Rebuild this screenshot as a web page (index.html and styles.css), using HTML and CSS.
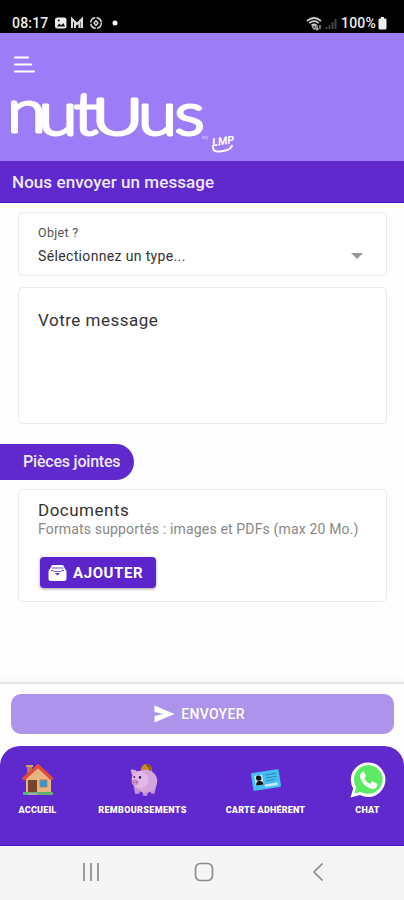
FILE: index.html
```html
<!DOCTYPE html>
<html lang="fr">
<head>
<meta charset="utf-8">
<title>Nous envoyer un message</title>
<link rel="stylesheet" href="styles.css">
</head>
<body>
<div class="status">
  <span class="time">08:17</span>
  <svg class="notif" width="66" height="14" viewBox="0 0 66 14">
    <rect x="1" y="1.5" width="11.5" height="11" rx="2.5" fill="#eee"/>
    <path d="M2.8 10.5l2.5-3 2 1.7 2-2.2 1.8 3.5z" fill="#111"/><circle cx="4.800" cy="4.500" r="1" fill="#111"/>
    <path d="M18 12V3l5 5 5-5v9M21 5v7M25.500 5v7" fill="none" stroke="#ddd" stroke-width="2"/>
    <circle cx="42" cy="7" r="5.300" fill="none" stroke="#ddd" stroke-width="1.500" stroke-dasharray="7 1.3"/>
    <path d="M42 3.500l2.800 3.500-2.800 3.500-2.800-3.500z" fill="#ddd"/><circle cx="42" cy="7" r="1" fill="#222"/>
    <circle cx="61" cy="7" r="2.500" fill="#fff"/>
  </svg>
  <svg class="signal" width="34" height="16" viewBox="0 0 34 16">
    <path d="M1 5Q8-1 15 5M3.200 7.200Q8 3 12.800 7.200M5.500 9.500Q8 7.500 10.500 9.500" fill="none" stroke="#ccc" stroke-width="1.700"/>
    <path d="M8 9l1.500 2L8 13l-1.500-2zM11 9v5M9.500 12.500l1.500 1.500 1.500-1.500M14 13V9" fill="none" stroke="#bbb" stroke-width="1.200"/>
    <path d="M20.500 13v-2M23.500 13V9M26.500 13V6M29.500 13V3" stroke="#444" stroke-width="2"/>
  </svg>
  <span class="percent">100%</span>
  <svg width="9" height="13" viewBox="0 0 9 13"><path d="M3 0h3v1.500h1.500q1 0 1 1V11q0 1.500-1.500 1.500H2Q.5 12.500.5 11V2.500q0-1 1-1H3z" fill="#eee"/></svg>
</div>
<header class="header">
  <svg class="menu" width="24" height="18" viewBox="0 0 24 18"><path d="M2 1.500h13M2 8.500h16M2 15.500h19" stroke="#fff" stroke-width="2.200" stroke-linecap="round"/></svg>
  <svg class="logo" width="240" height="66" viewBox="0 0 240 66">
    <g class="wordmark">
      <text transform="scale(1.200 1)"><tspan x="5.800" y="44">n</tspan><tspan x="32" y="47">u</tspan><tspan x="61.500" y="46.500">t</tspan></text>
      <text class="cap" transform="scale(1.360 1)" x="67.500" y="47">U</text>
      <text transform="scale(1.200 1)"><tspan x="115" y="47">u</tspan><tspan x="145.500" y="46.500">s</tspan></text>
    </g>
    <text class="by" x="202" y="51">by</text>
    <g transform="rotate(-8 222 52)">
      <text class="brand" x="212" y="57">LMP</text>
      <path d="M212 57q-1 6 6 6h5q6 0 8-4" fill="none" stroke="#fff" stroke-width="2" stroke-linecap="round"/>
    </g>
  </svg>
</header>
<h1 class="title">Nous envoyer un message</h1>
<main class="content">
  <section class="card subject">
    <div class="label">Objet ?</div>
    <div class="select"><span>Sélectionnez un type...</span><i class="caret"></i></div>
  </section>
  <section class="card message">Votre message</section>
  <h2 class="pill">Pièces jointes</h2>
  <section class="card docs">
    <div class="doc-title">Documents</div>
    <div class="doc-info">Formats supportés : images et PDFs (max 20 Mo.)</div>
    <button class="add">
      <svg width="19" height="18" viewBox="0 0 19 18"><path d="M3 3q0-2 2-2h9q2 0 2 2l2.500 4v8q0 2-2.500 2H3Q.5 17 .5 15V7z" fill="#fff"/><path d="M3.500 4h12M3 6.500h2l1.500 1h6l1.500-1h2" fill="none" stroke="#7650d0" stroke-width="1"/><path d="M7 9h5l-2.500 2.500z" fill="#5b27cc"/></svg>
      <span>AJOUTER</span>
    </button>
  </section>
</main>
<div class="send-bar">
  <button class="send"><svg width="21" height="18" viewBox="0 0 21 18"><path d="M.5.500L20.500 9 .5 17.500V11l9-2-9-2z" fill="#fff"/></svg><span>ENVOYER</span></button>
</div>
<nav class="tabs">
  <div class="tab home">
    <svg width="34" height="36" viewBox="0 0 34 36">
      <path d="M6 4h5v12H6z" fill="#b87855"/><path d="M5 3h7v2H5z" fill="#d89a72"/>
      <path d="M5 17L17 5l13 12v14H5z" fill="#e8b481"/>
      <path d="M2 17.500L17 4l14.500 13.500" fill="none" stroke="#e44b35" stroke-width="3.500"/>
      <path d="M7 18h9v13H7z" fill="#76452f"/><path d="M19 18h7v7h-7z" fill="#249be0" stroke="#b8804f"/>
      <path d="M2 30h30v3H2z" fill="#62ad72"/><path d="M7 31h10v2H7z" fill="#aaa"/>
    </svg><span>ACCUEIL</span>
  </div>
  <div class="tab refunds">
    <svg width="34" height="36" viewBox="0 0 34 36"><g transform="translate(3 1) scale(.88 .96)">
      <path d="M13 11q0-10 7-10t6 11z" fill="#c98c18"/><path d="M20 2q5 1 4 9" fill="none" stroke="#67431b" stroke-width="1.500"/>
      <path d="M5 23h7v9H7zM15 26h6v8h-5zM25 24h6l-2 8h-4z" fill="#c594d0"/>
      <ellipse cx="19" cy="19" rx="13" ry="12" fill="#d4a5dd"/><ellipse cx="12.500" cy="17" rx="9.500" ry="9" fill="#e3b9e9"/>
      <path d="M3.500 13L2 7q5-1 9 3zM14 9l4-2 2 6z" fill="#dba8df"/>
      <ellipse cx="7" cy="20" rx="4" ry="3" fill="#cb91d0"/><circle cx="5.500" cy="20" r=".7" fill="#805184"/><circle cx="8.500" cy="20" r=".7" fill="#805184"/>
      <circle cx="6" cy="14.500" r="1" fill="#392443"/><circle cx="12.500" cy="15" r="1.400" fill="#392443"/>
    </g></svg><span>REMBOURSEMENTS</span>
  </div>
  <div class="tab member">
    <svg width="34" height="36" viewBox="0 0 34 36"><g transform="rotate(-9 17 18)">
      <rect x="3" y="9" width="28" height="18" rx="1.500" fill="#48bdf0"/><rect x="6" y="12" width="8" height="10" fill="#b7eaff"/>
      <circle cx="10" cy="15" r="2.700" fill="#111"/><path d="M6.500 22q0-4 3.500-4t4 4z" fill="#111"/>
      <path d="M17 13h11M17 16h11M17 19h9" stroke="#2988ba"/><path d="M15 23.500h13" stroke="#c8eaf5" stroke-width="2.500"/>
    </g></svg><span>CARTE ADHÉRENT</span>
  </div>
  <div class="tab chat">
    <svg width="36" height="36" viewBox="0 0 36 36">
      <path d="M.5 35.500l2.700-9A17.300 17.300 0 1 1 10 33z" fill="#fff"/>
      <circle cx="18.300" cy="17.500" r="14.300" fill="#5bea62"/><path d="M4.500 31.500l2-8 6 6z" fill="#5bea62"/>
      <path d="M13 9.500q-5 3-2 8.500 4 8 12 9 4 0 4.500-5l-5-2.800-2.300 2.500q-4-1.500-6-5.500l1.800-2.200L14 9.500z" fill="#fff"/>
    </svg><span>CHAT</span>
  </div>
</nav>
<footer class="system">
  <svg width="18" height="18" viewBox="0 0 18 18"><path d="M2 0v18M9 0v18M16 0v18" stroke="#8c8c8c" stroke-width="1.700"/></svg>
  <svg width="20" height="20" viewBox="0 0 20 20"><rect x="1.500" y="1.500" width="17" height="17" rx="5" fill="none" stroke="#8c8c8c" stroke-width="1.700"/></svg>
  <svg width="12" height="20" viewBox="0 0 12 20"><path d="M10.500 1.500L2 10l8.500 8.500" fill="none" stroke="#8c8c8c" stroke-width="1.700"/></svg>
</footer>
</body>
</html>
```
FILE: styles.css
```css
* { box-sizing: border-box; }
body {
  margin: 0;
  width: 404px;
  height: 900px;
  display: flex;
  flex-direction: column;
  overflow: hidden;
  background: #fefefe;
  font-family: Roboto, "Liberation Sans", sans-serif;
  color: #333;
}
svg { display: block; flex: none; }
h1, h2 { margin: 0; }
button { border: 0; font-family: inherit; color: #fff; }
.status {
  height: 33px;
  padding: 13px 17px 0 12px;
  display: flex;
  align-items: flex-start;
  background: #000;
  color: #eee;
}
.time { font-size: 14px; line-height: 20px; letter-spacing: .2px; font-weight: 500; }
.notif { margin: 3px 0 0 5px; }
.signal { margin: 3px 1px 0 auto; }
.percent { font-size: 14px; line-height: 20px; font-weight: 500; margin-right: 2px; letter-spacing: .2px; }
.status > svg:last-child { margin-top: 4px; }
.header { height: 128px; padding-top: 23px; background: #9d7cf7; }
.menu { margin-left: 13px; }
.logo { margin-top: 14px; overflow: visible; }
.wordmark { font: 300 59px Lato, sans-serif; fill: #fff; stroke: #fff; stroke-width: 3px; stroke-linejoin: round; }
.cap { font-size: 52px; }
.by { font: 6px Roboto, sans-serif; fill: #d8c8ff; }
.brand { font: italic 700 11px Roboto, sans-serif; fill: #fff; }
.title {
  height: 42px;
  padding-left: 12px;
  line-height: 42px;
  font-size: 17px;
  font-weight: 500;
  letter-spacing: .07px;
  color: #eee8ff;
  background: #5f29ce;
  border-bottom: 1px solid #4a0fc0;
}
.content { height: 479px; padding: 9px 17px 0 18px; }
.card { border: 1px solid #e9e9e9; border-radius: 5px; background: #fff; padding-left: 19px; }
.subject { height: 64px; padding-top: 11px; }
.label { font-size: 12.500px; line-height: 17px; letter-spacing: .3px; color: #555; }
.select { display: flex; justify-content: space-between; align-items: center; padding-right: 23px; font-size: 14px; line-height: 30px; letter-spacing: .35px; }
.caret { border: 6px solid transparent; border-top-color: #999; border-bottom: 0; }
.message { height: 137px; margin-top: 11px; padding-top: 22px; font-size: 17px; line-height: 20px; letter-spacing: .5px; }
.pill {
  width: 134px;
  height: 36px;
  margin: 20px 0 0 -18px;
  padding-left: 23px;
  border-radius: 0 18px 18px 0;
  background: #5f29ce;
  color: #eee8ff;
  font-size: 16px;
  line-height: 36px;
  font-weight: 500;
  letter-spacing: -.2px;
}
.docs { height: 113px; margin-top: 9px; padding-top: 10px; }
.doc-title { font-size: 17px; line-height: 21px; letter-spacing: .5px; }
.doc-info { font-size: 14px; line-height: 17px; letter-spacing: .16px; color: #888; white-space: nowrap; }
.add {
  width: 116px;
  height: 31px;
  margin: 19px 0 0 2px;
  padding: 0 0 0 8px;
  display: flex;
  align-items: center;
  gap: 6px;
  border-radius: 4px;
  background: #5b25cb;
  box-shadow: 0 1px 3px #0006;
  font-size: 15px;
  font-weight: 700;
  letter-spacing: .6px;
}
.send-bar { height: 64px; padding: 10px 10px 0 11px; border-top: 2px solid #e5e5e5; box-shadow: 0 -4px 10px #00000008; }
.send {
  width: 100%;
  height: 40px;
  padding: 0 6px 0 0;
  display: flex;
  align-items: center;
  justify-content: center;
  gap: 6px;
  border-radius: 10px;
  background: #ad93e9;
  font-size: 14px;
  font-weight: 500;
  letter-spacing: .3px;
}
.tabs { position: relative; height: 100px; background: #5f29ce; border-radius: 20px 20px 0 0; display: grid; grid-template-columns: 75px 135px 111px 83px; border-bottom: 1px solid #4a0fc0; }
.tab { display: flex; flex-direction: column; align-items: center; padding-top: 16px; gap: 7px; color: #fff; font-size: 9px; font-weight: 900; line-height: 11px; letter-spacing: .2px; white-space: nowrap; }
.refunds { letter-spacing: .35px; }
.chat { padding-left: 10px; }
.system { height: 54px; background: #f5f5f5; display: flex; align-items: center; justify-content: space-between; padding: 0 80px 2px 82px; }
.system svg:nth-child(2) { margin-right: 4px; }
```
